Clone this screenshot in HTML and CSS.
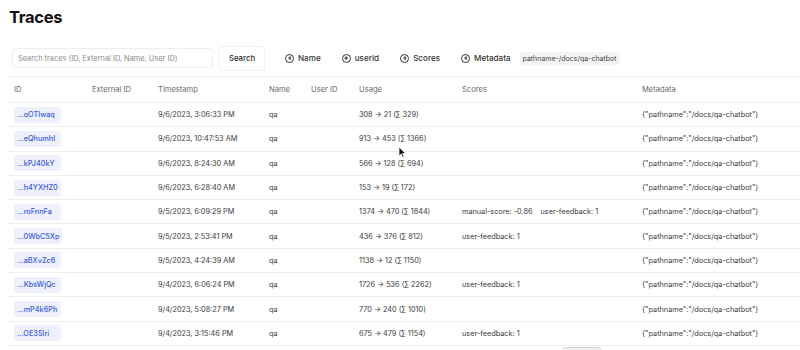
FILE: index.html
```html
<!DOCTYPE html>
<html lang="en">
<head>
    <meta charset="UTF-8">
    <meta name="viewport" content="width=device-width, initial-scale=1.0">
    <title>Traces</title>
    <link rel="stylesheet" href="styles.css">
</head>
<body>
    <div class="page">
        <h1 class="title">Traces</h1>

        <div class="toolbar">
            <input class="search" type="text" placeholder="Search traces (ID, External ID, Name, User ID)">
            <button class="search-btn">Search</button>

            <button class="filter"><span class="plus"></span>Name</button>
            <button class="filter"><span class="plus"></span>userId</button>
            <button class="filter"><span class="plus"></span>Scores</button>
            <button class="filter"><span class="plus"></span>Metadata</button>
            <span class="pill">pathname-/docs/qa-chatbot</span>
        </div>

        <div class="table">
            <div class="row head">
                <div>ID</div>
                <div>External ID</div>
                <div>Timestamp</div>
                <div>Name</div>
                <div>User ID</div>
                <div>Usage</div>
                <div>Scores</div>
                <div>Metadata</div>
            </div>

            <div class="row">
                <div><span class="badge">...oOTIwaq</span></div>
                <div></div>
                <div>9/6/2023, 3:06:33 PM</div>
                <div>qa</div>
                <div></div>
                <div>308 → 21 (∑ 329)</div>
                <div></div>
                <div>{"pathname":"/docs/qa-chatbot"}</div>
            </div>
            <div class="row">
                <div><span class="badge">...eQhumhl</span></div>
                <div></div>
                <div>9/6/2023, 10:47:53 AM</div>
                <div>qa</div>
                <div></div>
                <div>913 → 453 (∑ 1366)</div>
                <div></div>
                <div>{"pathname":"/docs/qa-chatbot"}</div>
            </div>
            <div class="row">
                <div><span class="badge">...kPJ40kY</span></div>
                <div></div>
                <div>9/6/2023, 8:24:30 AM</div>
                <div>qa</div>
                <div></div>
                <div>566 → 128 (∑ 694)</div>
                <div></div>
                <div>{"pathname":"/docs/qa-chatbot"}</div>
            </div>
            <div class="row">
                <div><span class="badge">...h4YXHZ0</span></div>
                <div></div>
                <div>9/6/2023, 6:28:40 AM</div>
                <div>qa</div>
                <div></div>
                <div>153 → 19 (∑ 172)</div>
                <div></div>
                <div>{"pathname":"/docs/qa-chatbot"}</div>
            </div>
            <div class="row">
                <div><span class="badge">...roFnnFa</span></div>
                <div></div>
                <div>9/5/2023, 6:09:29 PM</div>
                <div>qa</div>
                <div></div>
                <div>1374 → 470 (∑ 1844)</div>
                <div class="scores"><span>manual-score: -0.86</span><span>user-feedback: 1</span></div>
                <div>{"pathname":"/docs/qa-chatbot"}</div>
            </div>
            <div class="row">
                <div><span class="badge">...0WbC5Xp</span></div>
                <div></div>
                <div>9/5/2023, 2:53:41 PM</div>
                <div>qa</div>
                <div></div>
                <div>436 → 376 (∑ 812)</div>
                <div>user-feedback: 1</div>
                <div>{"pathname":"/docs/qa-chatbot"}</div>
            </div>
            <div class="row">
                <div><span class="badge">...aBXvZc6</span></div>
                <div></div>
                <div>9/5/2023, 4:24:39 AM</div>
                <div>qa</div>
                <div></div>
                <div>1138 → 12 (∑ 1150)</div>
                <div></div>
                <div>{"pathname":"/docs/qa-chatbot"}</div>
            </div>
            <div class="row">
                <div><span class="badge">...KbsWjQc</span></div>
                <div></div>
                <div>9/4/2023, 6:06:24 PM</div>
                <div>qa</div>
                <div></div>
                <div>1726 → 536 (∑ 2262)</div>
                <div>user-feedback: 1</div>
                <div>{"pathname":"/docs/qa-chatbot"}</div>
            </div>
            <div class="row">
                <div><span class="badge">...mP4k6Ph</span></div>
                <div></div>
                <div>9/4/2023, 5:08:27 PM</div>
                <div>qa</div>
                <div></div>
                <div>770 → 240 (∑ 1010)</div>
                <div></div>
                <div>{"pathname":"/docs/qa-chatbot"}</div>
            </div>
            <div class="row">
                <div><span class="badge">...OE3Slri</span></div>
                <div></div>
                <div>9/4/2023, 3:15:46 PM</div>
                <div>qa</div>
                <div></div>
                <div>675 → 479 (∑ 1154)</div>
                <div>user-feedback: 1</div>
                <div>{"pathname":"/docs/qa-chatbot"}</div>
            </div>
        </div>

        <div class="pager">
            <button class="pager-btn"></button>
        </div>
    </div>

    <svg class="cursor" width="9" height="13" viewBox="0 0 9 13">
        <path d="M1 1 L1 10 L3.2 8 L4.8 11.6 L6.2 11 L4.6 7.5 L7.6 7.5 Z" fill="#111" stroke="#fff" stroke-width="0.8"/>
    </svg>
</body>
</html>
```

FILE: styles.css
```css
body {
    margin: 0;
    font-family: Inter, "Noto Sans", sans-serif;
    color: #333;
    background: #fff;
    overflow: hidden;
}

.page {
    padding: 6px 0 0 8px;
    position: relative;
}

.title {
    margin: 0 0 0 1px;
    font-size: 16.5px;
    font-weight: 700;
    letter-spacing: -0.3px;
    line-height: 22px;
    color: #111;
}

.toolbar {
    display: flex;
    align-items: center;
    height: 26px;
    margin-top: 17px;
    padding-left: 4px;
    font-size: 7.6px;
}

.search {
    width: 201px;
    height: 20px;
    box-sizing: border-box;
    border: 1px solid #eeeeee;
    border-radius: 3px;
    padding: 0 5px;
    font-family: inherit;
    font-size: 7.4px;
    color: #333;
    outline: none;
}

.search::placeholder {
    color: #8a8a8a;
}

.search-btn {
    margin-left: 6px;
    width: 46px;
    height: 25px;
    border: 1px solid #f1f1f1;
    border-radius: 3px;
    background: #fff;
    font-family: inherit;
    font-size: 7.8px;
    font-weight: 500;
    color: #2a2a2a;
    padding: 0;
}

.filter {
    display: flex;
    align-items: center;
    gap: 3px;
    border: none;
    background: none;
    font-family: inherit;
    font-size: 8.1px;
    font-weight: 450;
    color: #333;
    padding: 0;
    margin-left: 20px;
}

.filter + .filter {
    margin-left: 21px;
}

.plus {
    width: 7px;
    height: 7px;
    border: 0.9px solid #333;
    border-radius: 50%;
    position: relative;
    flex: none;
    margin-right: 1px;
}

.plus::before,
.plus::after {
    content: "";
    position: absolute;
    background: #333;
    left: 50%;
    top: 50%;
    transform: translate(-50%, -50%);
}

.plus::before {
    width: 3.6px;
    height: 0.9px;
}

.plus::after {
    width: 0.9px;
    height: 3.6px;
}

.pill {
    margin-left: 9px;
    background: #f4f4f5;
    border-radius: 3px;
    padding: 2px 3px;
    font-size: 7px;
    color: #444;
}

.table {
    margin-top: 5px;
    border-top: 1px solid #eeeeee;
    width: 800px;
    font-size: 7.3px;
    color: #3a3a3a;
}

.row {
    display: grid;
    grid-template-columns: 78px 66px 111px 42px 48px 103px 180px 1fr;
    align-items: center;
    height: 24.3px;
    box-sizing: border-box;
    border-bottom: 1px solid #eeeeee;
}

.row > div {
    padding-left: 6px;
    white-space: nowrap;
}

.row.head {
    height: 26px;
    font-size: 7.6px;
    color: #6b6b6b;
}

.badge {
    display: inline-block;
    background: #eef1fc;
    color: #3a5bd9;
    font-weight: 500;
    border-radius: 3px;
    padding: 3.5px 3px;
    min-width: 41px;
}

.scores span + span {
    margin-left: 8px;
}

.pager {
    display: flex;
    padding: 1px 0 0 554px;
}

.pager-btn {
    width: 40px;
    height: 20px;
    border: 1px solid #d4d4d4;
    border-radius: 4px;
    background: #f3f3f3;
}

.cursor {
    position: absolute;
    left: 398px;
    top: 146px;
}
```
